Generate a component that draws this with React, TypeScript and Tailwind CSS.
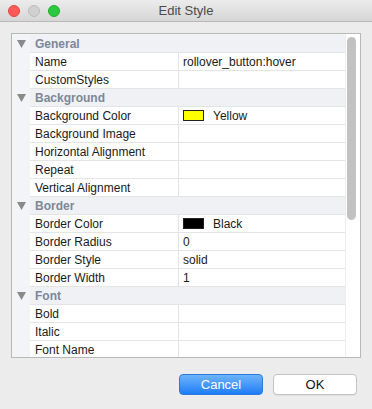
const ROWS: { type: 'h' | 'r'; label: string; value?: string; swatch?: string }[] = [
  { type: 'h', label: 'General' },
  { type: 'r', label: 'Name', value: 'rollover_button:hover' },
  { type: 'r', label: 'CustomStyles' },
  { type: 'h', label: 'Background' },
  { type: 'r', label: 'Background Color', value: 'Yellow', swatch: '#ffff00' },
  { type: 'r', label: 'Background Image' },
  { type: 'r', label: 'Horizontal Alignment' },
  { type: 'r', label: 'Repeat' },
  { type: 'r', label: 'Vertical Alignment' },
  { type: 'h', label: 'Border' },
  { type: 'r', label: 'Border Color', value: 'Black', swatch: '#000000' },
  { type: 'r', label: 'Border Radius', value: '0' },
  { type: 'r', label: 'Border Style', value: 'solid' },
  { type: 'r', label: 'Border Width', value: '1' },
  { type: 'h', label: 'Font' },
  { type: 'r', label: 'Bold' },
  { type: 'r', label: 'Italic' },
  { type: 'r', label: 'Font Name' },
];

function Row({ row }: { row: (typeof ROWS)[number] }) {
  if (row.type === 'h') {
    return (
      <div className="flex h-[18px] shrink-0">
        <div className="w-[18px] shrink-0 flex items-center justify-center pl-[1px]">
          <svg width="9" height="8" viewBox="0 0 9 8">
            <path d="M0 0 L9 0 L4.5 8 Z" fill="#8a8a8a" />
          </svg>
        </div>
        <div className="flex-1 bg-[#eff1f5] border-b border-[#e2e4e8] pl-[5px] text-[12px] leading-[18px] font-bold text-[#7d8797]">
          {row.label}
        </div>
      </div>
    );
  }
  return (
    <div className="flex h-[18px] shrink-0">
      <div className="w-[18px] shrink-0" />
      <div className="w-[149px] shrink-0 bg-white border-b border-r border-[#e4e4e4] pl-[5px] text-[12px] leading-[18px] text-[#1a1a1a] whitespace-nowrap overflow-hidden">
        {row.label}
      </div>
      <div className="flex-1 bg-white border-b border-[#e4e4e4] pl-[4px] text-[12px] leading-[18px] text-[#1a1a1a] flex items-center whitespace-nowrap">
        {row.swatch && (
          <span className="inline-block w-[21px] h-[11px] border border-[#222] mr-[9px]" style={{ background: row.swatch }} />
        )}
        {row.value}
      </div>
    </div>
  );
}

export default function App() {
  return (
    <div className="w-[372px] h-[409px] bg-[#ececec] flex flex-col overflow-hidden" style={{ fontFamily: '"Liberation Sans", Arial, sans-serif' }}>
      {/* title bar */}
      <div className="relative h-[22px] shrink-0 bg-gradient-to-b from-[#ececec] to-[#d6d6d6] border-b border-[#b9b9b9] flex items-center">
        <div className="flex gap-[8px] pl-[8px]">
          <span className="w-[12px] h-[12px] rounded-full bg-[#fc5b57] border border-[#e2463f]" />
          <span className="w-[12px] h-[12px] rounded-full bg-[#d0d0d0] border border-[#bdbdbd]" />
          <span className="w-[12px] h-[12px] rounded-full bg-[#2ac940] border border-[#1fae2e]" />
        </div>
        <div className="absolute inset-0 flex items-center justify-center text-[13px] text-[#4b4b4b]">Edit Style</div>
      </div>

      {/* property panel */}
      <div className="pt-[11px] pl-[11px]">
        <div className="w-[350px] h-[325px] border border-[#b8b8b8] bg-white flex overflow-hidden">
          <div className="w-[333px] bg-[#f3f4f7] pt-[1px] flex flex-col">
            {ROWS.map(r => <Row key={r.label} row={r} />)}
          </div>
          <div className="w-[15px] border-l border-[#ededed] bg-white pt-[3px] pl-[1px]">
            <div className="w-[9px] h-[183px] rounded-full bg-[#c2c2c2]" />
          </div>
        </div>
      </div>

      {/* buttons */}
      <div className="flex justify-end gap-[10px] pr-[15px] pt-[16px]">
        <button className="w-[84px] h-[21px] rounded-[4px] bg-gradient-to-b from-[#6cb3fa] to-[#1a7df7] border border-[#2c7ae0] text-white text-[13px] leading-none">
          Cancel
        </button>
        <button className="w-[84px] h-[21px] rounded-[4px] bg-white border border-[#c3c3c3] text-[#111] text-[13px] leading-none shadow-[0_1px_0_rgba(0,0,0,0.05)]">
          OK
        </button>
      </div>
    </div>
  );
}
